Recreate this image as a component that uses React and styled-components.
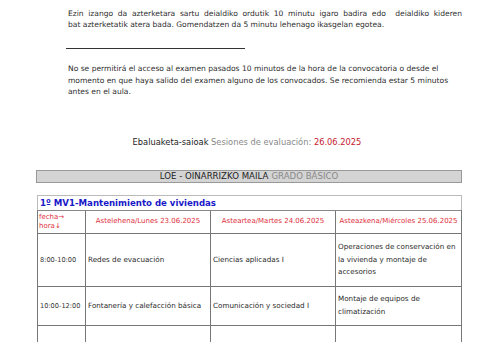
import React from 'react';
import styled, { createGlobalStyle } from 'styled-components';

const Global = createGlobalStyle`
  html, body { margin: 0; padding: 0; background: #fff; }
  body { font-family: "DejaVu Sans", Verdana, sans-serif; color: #222; }
`;

const Page = styled.div`
  width: 480px;
  height: 342px;
  overflow: hidden;
  padding-top: 8px;
  box-sizing: border-box;
`;

const Notice = styled.p`
  margin: 0 18px 0 68px;
  font-size: 7.55px;
  line-height: ${(p) => p.lh || '11.6px'};
  color: #2a2a2a;
`;

const FullLine = styled.span`
  display: block;
  text-align: justify;
  text-align-last: justify;
  white-space: nowrap;
`;

const Rule = styled.div`
  margin: 18px 0 14px 66px;
  width: 179px;
  height: 1px;
  background: #333;
`;

const Sessions = styled.div`
  margin-top: 39px;
  text-align: center;
  font-size: 8.3px;
  padding-left: 14px;
  color: #222;
`;

const Muted = styled.span`
  color: ${(p) => p.color || '#888'};
`;

const LevelBar = styled.div`
  margin: 23px 18px 0 36px;
  height: 13px;
  box-sizing: border-box;
  border: 1px solid #999;
  background: #d4d4d4;
  display: flex;
  align-items: center;
  justify-content: center;
  font-size: 8.6px;
  gap: 3px;
`;

const Table = styled.table`
  margin: 12px 0 0 37px;
  width: 424px;
  border-collapse: collapse;
  table-layout: fixed;
  border: 1px solid #bbb;
`;

const Title = styled.th`
  text-align: left;
  color: #1818c8;
  font-size: 8.6px;
  font-weight: bold;
  height: 14px;
  padding: 0 2px;
  border: 1px solid #bbb;
  border-bottom: 1px solid #888;
`;

const Head = styled.th`
  color: #e03040;
  font-weight: normal;
  font-size: 7px;
  white-space: ${(p) => (p.left ? 'normal' : 'nowrap')};
  text-align: ${(p) => (p.left ? 'left' : 'center')};
  height: 22px;
  padding: 0 1px;
  line-height: 9px;
  border: 1px solid #777;
`;

const Row = styled.tr`
  height: ${(p) => p.h}px;
`;

const Time = styled.td`
  font-size: 6.6px;
  padding: 0 2px;
  border: 1px solid #777;
  color: #333;
`;

const Cell = styled.td`
  font-size: 7.2px;
  line-height: 12.5px;
  padding: 0 2px;
  border: 1px solid #777;
  color: #2a2a2a;
  vertical-align: middle;
`;

const slots = [
  {
    time: '8:00-10:00',
    h: 53,
    items: [
      'Redes de evacuación',
      'Ciencias aplicadas I',
      'Operaciones de conservación en la vivienda y montaje de accesorios',
    ],
  },
  {
    time: '10:00-12:00',
    h: 39,
    items: [
      'Fontanería y calefacción básica',
      'Comunicación y sociedad I',
      'Montaje de equipos de climatización',
    ],
  },
  { time: '', h: 40, items: ['', '', ''] },
];

export default function App() {
  return (
    <Page>
      <Global />
      <Notice lh="11px">
        <FullLine>Ezin izango da azterketara sartu deialdiko ordutik 10 minutu igaro badira edo&nbsp; deialdiko kideren</FullLine>
        bat azterketatik atera bada. Gomendatzen da 5 minutu lehenago ikasgelan egotea.
      </Notice>
      <Rule />
      <Notice>
        No se permitirá el acceso al examen pasados 10 minutos de la hora de la convocatoria o desde el momento en que haya salido del examen alguno de los convocados. Se recomienda estar 5 minutos antes en el aula.
      </Notice>
      <Sessions>
        Ebaluaketa-saioak <Muted>Sesiones de evaluación:</Muted> <Muted color="#c42030">26.06.2025</Muted>
      </Sessions>
      <LevelBar>
        <span>LOE - OINARRIZKO MAILA</span>
        <Muted>GRADO BÁSICO</Muted>
      </LevelBar>
      <Table>
        <colgroup>
          <col style={{ width: '48px' }} />
          <col style={{ width: '125px' }} />
          <col style={{ width: '125px' }} />
          <col style={{ width: '126px' }} />
        </colgroup>
        <thead>
          <tr>
            <Title colSpan={4}>1º MV1-Mantenimiento de viviendas</Title>
          </tr>
          <tr>
            <Head left>fecha→<br />hora↓</Head>
            <Head>Astelehena/Lunes 23.06.2025</Head>
            <Head>Asteartea/Martes 24.06.2025</Head>
            <Head>Asteazkena/Miércoles 25.06.2025</Head>
          </tr>
        </thead>
        <tbody>
          {slots.map((s, i) => (
            <Row key={i} h={s.h}>
              <Time>{s.time}</Time>
              {s.items.map((t, j) => (
                <Cell key={j}>{t}</Cell>
              ))}
            </Row>
          ))}
        </tbody>
      </Table>
    </Page>
  );
}
